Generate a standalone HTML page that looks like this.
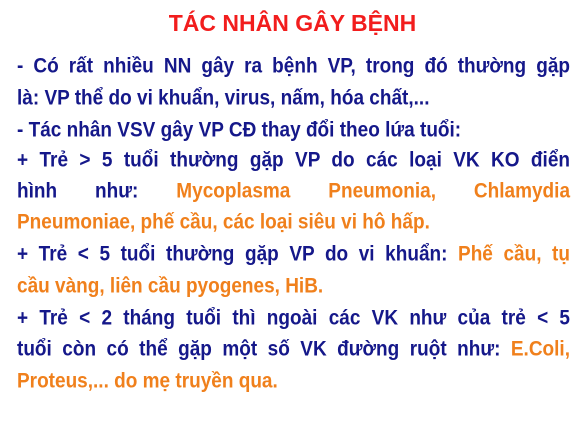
<!DOCTYPE html>
<html><head><meta charset="utf-8"><style>
body{margin:0;width:585px;height:421px;background:#fff;overflow:hidden;font-family:"Liberation Sans",sans-serif;font-weight:bold}
.t{position:absolute;top:9px;left:0;width:585px;text-align:center;color:#f21d1d;font-size:23px;line-height:28px}
.l{position:absolute;left:17px;width:553px;font-size:19px;line-height:24px;color:#15188a;white-space:nowrap;transform:scaleY(1.12);transform-origin:0 50%}
.j{text-align:justify;text-align-last:justify}
.o{color:#f0801c}
</style></head><body>
<div class="t">TÁC NHÂN GÂY BỆNH</div>
<div class="l j" style="top:55px">- Có rất nhiều NN gây ra bệnh VP, trong đó thường gặp</div>
<div class="l" style="top:87px">là: VP thể do vi khuẩn, virus, nấm, hóa chất,...</div>
<div class="l" style="top:119px">- Tác nhân VSV gây VP CĐ thay đổi theo lứa tuổi:</div>
<div class="l j" style="top:149px">+ Trẻ &gt; 5 tuổi thường gặp VP do các loại VK KO điển</div>
<div class="l j" style="top:180px">hình như: <span class="o">Mycoplasma Pneumonia, Chlamydia</span></div>
<div class="l o" style="top:211px">Pneumoniae, phế cầu, các loại siêu vi hô hấp.</div>
<div class="l j" style="top:243px">+ Trẻ &lt; 5 tuổi thường gặp VP do vi khuẩn: <span class="o">Phế cầu, tụ</span></div>
<div class="l o" style="top:275px">cầu vàng, liên cầu pyogenes, HiB.</div>
<div class="l j" style="top:307px">+ Trẻ &lt; 2 tháng tuổi thì ngoài các VK như của trẻ &lt; 5</div>
<div class="l j" style="top:338px">tuổi còn có thể gặp một số VK đường ruột như: <span class="o">E.Coli,</span></div>
<div class="l o" style="top:370px">Proteus,... do mẹ truyền qua.</div>
</body></html>
